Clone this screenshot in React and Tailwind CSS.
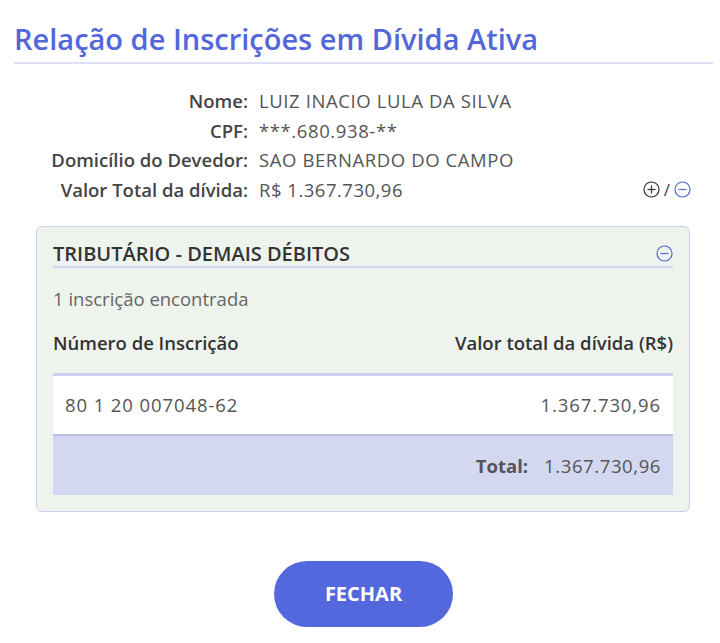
export default function App() {
  const rows = [
    ['Nome:', 'LUIZ INACIO LULA DA SILVA'],
    ['CPF:', '***.680.938-**'],
    ['Domicílio do Devedor:', 'SAO BERNARDO DO CAMPO'],
  ]

  return (
    <div className="min-h-screen bg-white pl-[14px] pr-[7px] pt-[21px] font-['Open_Sans','Noto_Sans',sans-serif] text-[#555]">
      <h1 className="border-b-2 border-[#dde0f7] pb-[6px] text-[29px] font-semibold leading-[35px] text-[#5367db]">
        Relação de Inscrições em Dívida Ativa
      </h1>

      <div className="mt-[22px] text-[18.5px] leading-[29.5px]">
        {rows.map(([label, value]) => (
          <div key={label} className="flex">
            <span className="w-[245px] pr-[11px] text-right font-semibold text-[#444]">{label}</span>
            <span className="tracking-[0.6px]">{value}</span>
          </div>
        ))}
        <div className="flex items-center">
          <span className="w-[245px] pr-[11px] text-right font-semibold text-[#444]">Valor Total da dívida:</span>
          <span className="flex-1 tracking-[0.5px]">R$ 1.367.730,96</span>
          <span className="mr-[22px] flex items-center gap-[4px] text-[#444]">
            <CircleIcon plus color="#333" />
            <span className="text-[17px]">/</span>
            <CircleIcon color="#5367db" />
          </span>
        </div>
      </div>

      <div className="ml-[22px] mr-[23px] mt-[22px] rounded-[6px] border border-[#c9cdec] bg-[#eff3ee] px-[16px] pb-[16px] pt-[14px]">
        <div className="flex items-center justify-between border-b-2 border-[#d0d4ec]">
          <span className="text-[20px] font-semibold leading-[25px] text-[#333]">TRIBUTÁRIO - DEMAIS DÉBITOS</span>
          <CircleIcon color="#5367db" />
        </div>
        <p className="mt-[16px] text-[18.5px] leading-[30px] text-[#666]">1 inscrição encontrada</p>
        <div className="mt-[14px] flex justify-between text-[18.5px] font-semibold leading-[30px] text-[#333]">
          <span>Número de Inscrição</span>
          <span>Valor total da dívida (R$)</span>
        </div>
        <div className="mt-[15px] border-t-[3px] border-[#c9cdf0]">
          <div className="flex h-[58px] items-center justify-between bg-white px-[12px] text-[18.5px] tracking-[0.9px] text-[#555]">
            <span>80 1 20 007048-62</span>
            <span>1.367.730,96</span>
          </div>
          <div className="flex h-[61px] items-center justify-end gap-[16px] border-t-2 border-[#b9bfe9] bg-[#d3d7f0] px-[12px] text-[18.5px] text-[#555]">
            <span className="font-bold">Total:</span>
            <span className="tracking-[0.6px]">1.367.730,96</span>
          </div>
        </div>
      </div>

      <div className="mt-[49px] flex justify-center">
        <button className="h-[66px] w-[179px] rounded-full bg-[#5468dd] text-[20px] font-bold text-white">
          FECHAR
        </button>
      </div>
    </div>
  )
}

function CircleIcon({ plus, color }) {
  return (
    <svg width="17" height="17" viewBox="0 0 17 17" fill="none" stroke={color} strokeWidth="1.2">
      <circle cx="8.5" cy="8.5" r="7.5" />
      <line x1="4.5" y1="8.5" x2="12.5" y2="8.5" />
      {plus && <line x1="8.5" y1="4.5" x2="8.5" y2="12.5" />}
    </svg>
  )
}
